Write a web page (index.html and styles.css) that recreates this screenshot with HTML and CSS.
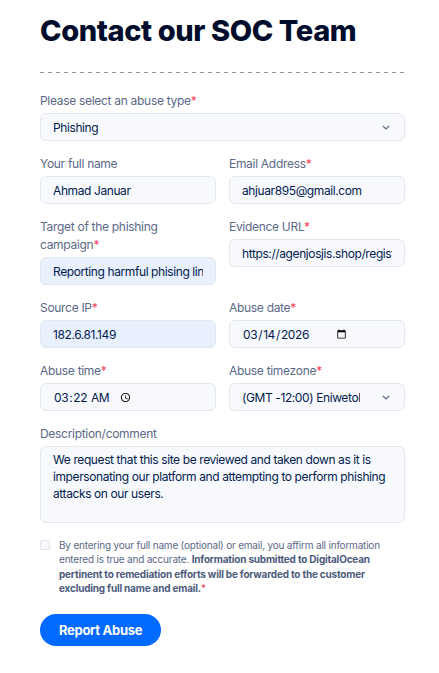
FILE: index.html
```html
<!DOCTYPE html>
<html lang="en">
<head>
    <meta charset="UTF-8">
    <meta name="viewport" content="width=device-width, initial-scale=1.0">
    <title>Contact our SOC Team</title>
    <link rel="stylesheet" href="styles.css">
</head>
<body>
    <div class="container">
        <h1>Contact our SOC Team</h1>
        <div class="divider"></div>

        <form class="abuse-form">
            <div class="field full">
                <label for="type">Please select an abuse type<span class="req">*</span></label>
                <div class="select-wrap">
                    <select id="type">
                        <option>Phishing</option>
                    </select>
                    <svg class="chevron" width="8" height="5" viewBox="0 0 8 5"><path d="M0.8 0.8l3.2 3.2 3.2-3.2" fill="none" stroke="#5b6987" stroke-width="1.2"/></svg>
                </div>
            </div>

            <div class="field">
                <label for="name">Your full name</label>
                <input type="text" id="name" value="Ahmad Januar">
            </div>
            <div class="field">
                <label for="email">Email Address<span class="req">*</span></label>
                <input type="email" id="email" value="ahjuar895@gmail.com">
            </div>

            <div class="field">
                <label for="target">Target of the phishing campaign<span class="req">*</span></label>
                <input type="text" id="target" class="filled" value="Reporting harmful phising link">
            </div>
            <div class="field">
                <label for="url">Evidence URL<span class="req">*</span></label>
                <input type="text" id="url" value="https://agenjosjis.shop/register">
            </div>

            <div class="field">
                <label for="ip">Source IP<span class="req">*</span></label>
                <input type="text" id="ip" class="filled" value="182.6.81.149">
            </div>
            <div class="field">
                <label for="date">Abuse date<span class="req">*</span></label>
                <input type="date" id="date" value="2026-03-14">
            </div>

            <div class="field">
                <label for="time">Abuse time<span class="req">*</span></label>
                <input type="time" id="time" value="03:22">
            </div>
            <div class="field">
                <label for="tz">Abuse timezone<span class="req">*</span></label>
                <div class="select-wrap">
                    <select id="tz" class="tz">
                        <option>(GMT -12:00) Eniwetok, Kwajalein</option>
                    </select>
                    <svg class="chevron" width="8" height="5" viewBox="0 0 8 5"><path d="M0.8 0.8l3.2 3.2 3.2-3.2" fill="none" stroke="#5b6987" stroke-width="1.2"/></svg>
                </div>
            </div>

            <div class="field full">
                <label for="comment">Description/comment</label>
                <textarea id="comment" rows="4">We request that this site be reviewed and taken down as it is impersonating our platform and attempting to perform phishing attacks on our users.</textarea>
            </div>

            <div class="consent full">
                <input type="checkbox" id="consent">
                <label for="consent">By entering your full name (optional) or email, you affirm all information entered is true and accurate. <strong>Information submitted to DigitalOcean pertinent to remediation efforts will be forwarded to the customer excluding full name and email.</strong><span class="req">*</span></label>
            </div>

            <div class="full">
                <button type="button">Report Abuse</button>
            </div>
        </form>
    </div>
</body>
</html>
```

FILE: styles.css
```css
body {
    font-family: 'Inter', 'Liberation Sans', sans-serif;
    background-color: #ffffff;
    color: #031b4e;
    margin: 0;
}

.container {
    width: 365px;
    margin-left: 40px;
    padding-top: 14px;
}

h1 {
    font-size: 29px;
    font-weight: 800;
    letter-spacing: -0.4px;
    color: #000c2b;
    margin: 0;
    line-height: 34px;
}

.divider {
    height: 1px;
    margin-top: 24px;
    background: repeating-linear-gradient(to right, #8b94aa 0 4px, transparent 4px 8px);
}

.abuse-form {
    display: grid;
    grid-template-columns: 1fr 1fr;
    column-gap: 13px;
    row-gap: 14px;
    align-items: start;
    margin-top: 19px;
}

.full {
    grid-column: 1 / -1;
}

.field label {
    display: block;
    font-size: 12px;
    letter-spacing: -0.3px;
    line-height: 18px;
    color: #5b6987;
    margin-bottom: 3px;
}

.req {
    color: #f5415c;
}

.field input,
.field select,
.field textarea {
    display: block;
    box-sizing: border-box;
    width: 100%;
    height: 28px;
    padding: 0 12px;
    border: 1px solid #e3e7ef;
    border-radius: 6px;
    background-color: #f7f9fd;
    font-family: inherit;
    font-size: 12px;
    letter-spacing: -0.4px;
    color: #031b4e;
    outline: none;
}

.field input.filled {
    background-color: #e8f0fe;
}

/* keep the picker icons right after the value instead of at the far edge */
.field input::-webkit-datetime-edit {
    flex: none;
}

.field input::-webkit-calendar-picker-indicator {
    margin-left: 5px;
    padding: 0;
    width: 11px;
    height: 11px;
}

.field input[type="time"]::-webkit-calendar-picker-indicator {
    margin-left: 9px;
}

.field select {
    appearance: none;
    padding-right: 32px;
}

.field select.tz {
    padding-right: 44px;
}

.select-wrap {
    position: relative;
}

.select-wrap .chevron {
    position: absolute;
    right: 15px;
    top: 12px;
    pointer-events: none;
}

.field textarea {
    height: 77px;
    padding: 4px 12px;
    line-height: 17px;
    resize: none;
}

.consent {
    display: flex;
    align-items: flex-start;
    gap: 9px;
    margin-top: 1px;
    padding-right: 20px;
}

.consent input {
    appearance: none;
    flex: none;
    width: 10px;
    height: 10px;
    margin: 2px 0 0;
    border: 1px solid #dfe3ec;
    border-radius: 2px;
    background-color: #f7f9fd;
}

.consent label {
    font-size: 10px;
    letter-spacing: -0.2px;
    line-height: 14.4px;
    color: #5b6987;
}

.consent strong {
    color: #4d5b7c;
    font-weight: 700;
}

button {
    margin-top: 4px;
    height: 32px;
    padding: 0 19px;
    border: none;
    border-radius: 16px;
    background-color: #0069ff;
    color: #ffffff;
    font-family: inherit;
    font-size: 13px;
    letter-spacing: -0.3px;
    font-weight: 700;
    cursor: pointer;
}
```
